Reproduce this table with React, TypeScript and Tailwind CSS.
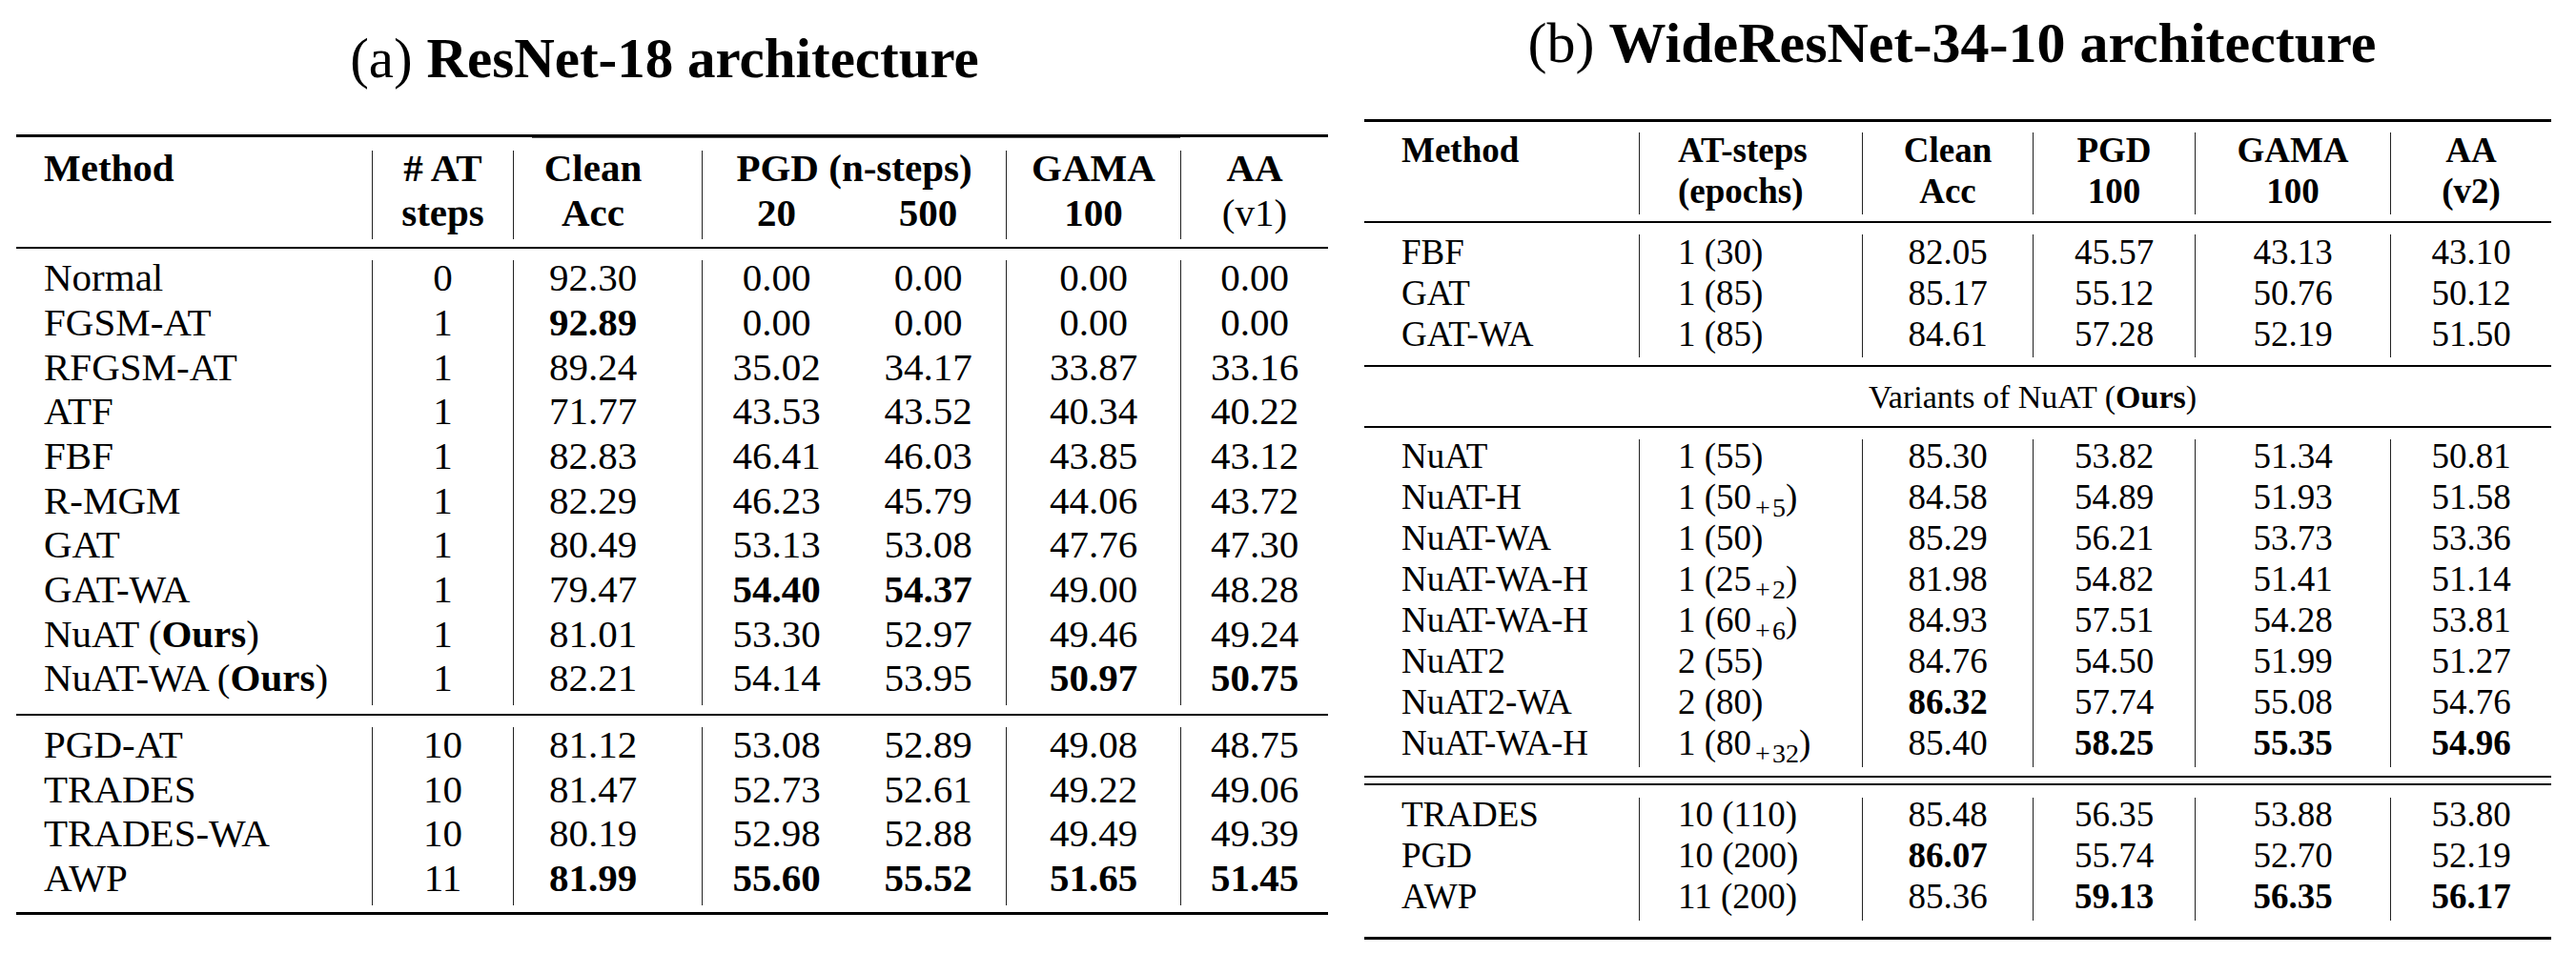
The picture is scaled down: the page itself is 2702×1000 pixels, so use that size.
import React from "react";

type N = React.ReactNode;

const V = (s: string): N =>
  s.startsWith("*") ? <span className="font-bold">{s.slice(1)}</span> : s;

const Ours = (name: string): N => (
  <>
    {name} (<span className="font-bold">Ours</span>)
  </>
);

const Sub = ({ s }: { s: string }) => (
  <span className="relative top-[8px] ml-[2px] text-[28px] leading-none">
    <span className="mx-[2px]">+</span>
    {s}
  </span>
);

const leftA: N[][] = [
  ["Normal", "0", "92.30", "0.00", "0.00", "0.00", "0.00"],
  ["FGSM-AT", "1", "*92.89", "0.00", "0.00", "0.00", "0.00"],
  ["RFGSM-AT", "1", "89.24", "35.02", "34.17", "33.87", "33.16"],
  ["ATF", "1", "71.77", "43.53", "43.52", "40.34", "40.22"],
  ["FBF", "1", "82.83", "46.41", "46.03", "43.85", "43.12"],
  ["R-MGM", "1", "82.29", "46.23", "45.79", "44.06", "43.72"],
  ["GAT", "1", "80.49", "53.13", "53.08", "47.76", "47.30"],
  ["GAT-WA", "1", "79.47", "*54.40", "*54.37", "49.00", "48.28"],
  [Ours("NuAT"), "1", "81.01", "53.30", "52.97", "49.46", "49.24"],
  [Ours("NuAT-WA"), "1", "82.21", "54.14", "53.95", "*50.97", "*50.75"],
];

const leftB: N[][] = [
  ["PGD-AT", "10", "81.12", "53.08", "52.89", "49.08", "48.75"],
  ["TRADES", "10", "81.47", "52.73", "52.61", "49.22", "49.06"],
  ["TRADES-WA", "10", "80.19", "52.98", "52.88", "49.49", "49.39"],
  ["AWP", "11", "*81.99", "*55.60", "*55.52", "*51.65", "*51.45"],
];

const rightA: N[][] = [
  ["FBF", "1 (30)", "82.05", "45.57", "43.13", "43.10"],
  ["GAT", "1 (85)", "85.17", "55.12", "50.76", "50.12"],
  ["GAT-WA", "1 (85)", "84.61", "57.28", "52.19", "51.50"],
];

const rightB: N[][] = [
  ["NuAT", "1 (55)", "85.30", "53.82", "51.34", "50.81"],
  ["NuAT-H", <>1 (50<Sub s="5" />)</>, "84.58", "54.89", "51.93", "51.58"],
  ["NuAT-WA", "1 (50)", "85.29", "56.21", "53.73", "53.36"],
  ["NuAT-WA-H", <>1 (25<Sub s="2" />)</>, "81.98", "54.82", "51.41", "51.14"],
  ["NuAT-WA-H", <>1 (60<Sub s="6" />)</>, "84.93", "57.51", "54.28", "53.81"],
  ["NuAT2", "2 (55)", "84.76", "54.50", "51.99", "51.27"],
  ["NuAT2-WA", "2 (80)", "*86.32", "57.74", "55.08", "54.76"],
  ["NuAT-WA-H", <>1 (80<Sub s="32" />)</>, "85.40", "*58.25", "*55.35", "*54.96"],
];

const rightC: N[][] = [
  ["TRADES", "10 (110)", "85.48", "56.35", "53.88", "53.80"],
  ["PGD", "10 (200)", "*86.07", "55.74", "52.70", "52.19"],
  ["AWP", "11 (200)", "85.36", "*59.13", "*56.35", "*56.17"],
];

const cv = (x: N): N => (typeof x === "string" ? V(x) : x);

function LRow({ r }: { r: N[] }) {
  return (
    <div className="flex h-[46.67px] leading-[36.3px] whitespace-nowrap">
      <div className="w-[373px] shrink-0 pl-[29px]">{cv(r[0])}</div>
      <div className="w-[148px] shrink-0 border-l border-[#222] text-center">{cv(r[1])}</div>
      <div className="w-[198px] shrink-0 border-l border-[#222] pr-[31px] text-center">{cv(r[2])}</div>
      <div className="w-[156px] shrink-0 border-l border-[#222] text-center">{cv(r[3])}</div>
      <div className="w-[163px] shrink-0 text-center">{cv(r[4])}</div>
      <div className="w-[183px] shrink-0 border-l border-[#222] text-center">{cv(r[5])}</div>
      <div className="w-[155px] shrink-0 border-l border-[#222] text-center">{cv(r[6])}</div>
    </div>
  );
}

function LL({ children }: { children?: N }) {
  return <div className="h-[46.67px] leading-[36.3px]">{children}</div>;
}

function RRow({ r, rowCls }: { r: N[]; rowCls: string }) {
  return (
    <div className={rowCls}>
      <div className="w-[288px] shrink-0 pl-[39px]">{cv(r[0])}</div>
      <div className="w-[234px] shrink-0 border-l border-[#222] pl-[40px]">{cv(r[1])}</div>
      <div className="w-[179px] shrink-0 border-l border-[#222] text-center">{cv(r[2])}</div>
      <div className="w-[170px] shrink-0 border-l border-[#222] text-center">{cv(r[3])}</div>
      <div className="w-[205px] shrink-0 border-l border-[#222] text-center">{cv(r[4])}</div>
      <div className="w-[169px] shrink-0 border-l border-[#222] text-center">{cv(r[5])}</div>
    </div>
  );
}

function RL({ children }: { children?: N }) {
  return <div className="h-[43px] leading-[37px]">{children}</div>;
}

export default function App() {
  return (
    <div className="flex h-[1000px] w-[2702px] bg-white text-black font-['Liberation_Serif','Times_New_Roman',serif]">
      {/* Left panel */}
      <div className="ml-[17px] flex w-[1376px] shrink-0 flex-col text-[41px]">
        <div className="h-[141px] whitespace-nowrap pt-[29px] pr-[16px] text-center text-[59px] leading-[64px]">
          (a) <span className="font-bold">ResNet-18 architecture</span>
        </div>
        <div className="h-[3px] bg-black" />
        <div className="ml-[541px] h-[1px] w-[680px] bg-[#555]" />
        <div className="mt-[13px] flex whitespace-nowrap font-bold">
          <div className="w-[373px] shrink-0 pl-[29px]">
            <LL>Method</LL>
            <LL />
          </div>
          <div className="w-[148px] shrink-0 border-l border-[#222] text-center">
            <LL># AT</LL>
            <LL>steps</LL>
          </div>
          <div className="w-[198px] shrink-0 border-l border-[#222] pr-[31px] text-center">
            <LL>Clean</LL>
            <LL>Acc</LL>
          </div>
          <div className="w-[319px] shrink-0 border-l border-[#222]">
            <div className="h-[46.67px] text-center leading-[36.3px]">PGD (n-steps)</div>
            <div className="flex h-[46.67px] leading-[36.3px]">
              <div className="w-[155px] shrink-0 text-center">20</div>
              <div className="w-[163px] shrink-0 text-center">500</div>
            </div>
          </div>
          <div className="w-[183px] shrink-0 border-l border-[#222] text-center">
            <LL>GAMA</LL>
            <LL>100</LL>
          </div>
          <div className="w-[155px] shrink-0 border-l border-[#222] text-center">
            <LL>AA</LL>
            <LL>
              <span className="font-normal">(v1)</span>
            </LL>
          </div>
        </div>
        <div className="mt-[8px] h-[2px] bg-black" />
        <div className="mt-[12px]">
          {leftA.map((r, i) => (
            <LRow key={i} r={r} />
          ))}
        </div>
        <div className="mt-[9px] h-[2px] bg-black" />
        <div className="mt-[12px]">
          {leftB.map((r, i) => (
            <LRow key={i} r={r} />
          ))}
        </div>
        <div className="mt-[7.5px] h-[3px] bg-black" />
      </div>

      {/* Right panel */}
      <div className="ml-[38px] flex w-[1245px] shrink-0 flex-col text-[37px]">
        <div className="h-[125px] whitespace-nowrap pt-[13px] pr-[12px] text-center text-[60px] leading-[64px]">
          (b) <span className="font-bold">WideResNet-34-10 architecture</span>
        </div>
        <div className="h-[3px] bg-black" />
        <div className="mt-[11px] flex whitespace-nowrap font-bold">
          <div className="w-[288px] shrink-0 pl-[39px]">
            <RL>Method</RL>
            <RL />
          </div>
          <div className="w-[234px] shrink-0 border-l border-[#222] pl-[40px]">
            <RL>AT-steps</RL>
            <RL>(epochs)</RL>
          </div>
          <div className="w-[179px] shrink-0 border-l border-[#222] text-center">
            <RL>Clean</RL>
            <RL>Acc</RL>
          </div>
          <div className="w-[170px] shrink-0 border-l border-[#222] text-center">
            <RL>PGD</RL>
            <RL>100</RL>
          </div>
          <div className="w-[205px] shrink-0 border-l border-[#222] text-center">
            <RL>GAMA</RL>
            <RL>100</RL>
          </div>
          <div className="w-[169px] shrink-0 border-l border-[#222] text-center">
            <RL>AA</RL>
            <RL>(v2)</RL>
          </div>
        </div>
        <div className="mt-[7px] h-[2px] bg-black" />
        <div className="mt-[12px]">
          {rightA.map((r, i) => (
            <RRow key={i} r={r} rowCls="flex h-[43px] leading-[37px] whitespace-nowrap" />
          ))}
        </div>
        <div className="mt-[8px] h-[2px] bg-black" />
        <div className="h-[62px] whitespace-nowrap pl-[529px] pt-[11.5px] text-[34px] leading-[40px]">
          Variants of NuAT (<span className="font-bold">Ours</span>)
        </div>
        <div className="h-[2px] bg-black" />
        <div className="mt-[11.5px]">
          {rightB.map((r, i) => (
            <RRow key={i} r={r} rowCls="flex h-[43px] leading-[35px] whitespace-nowrap" />
          ))}
        </div>
        <div className="mt-[9px] h-[2px] bg-black" />
        <div className="mt-[6.5px] h-[2px] bg-black" />
        <div className="mt-[12.5px]">
          {rightC.map((r, i) => (
            <RRow key={i} r={r} rowCls="flex h-[43px] leading-[35px] whitespace-nowrap" />
          ))}
        </div>
        <div className="mt-[17.5px] h-[3px] bg-black" />
      </div>
    </div>
  );
}
